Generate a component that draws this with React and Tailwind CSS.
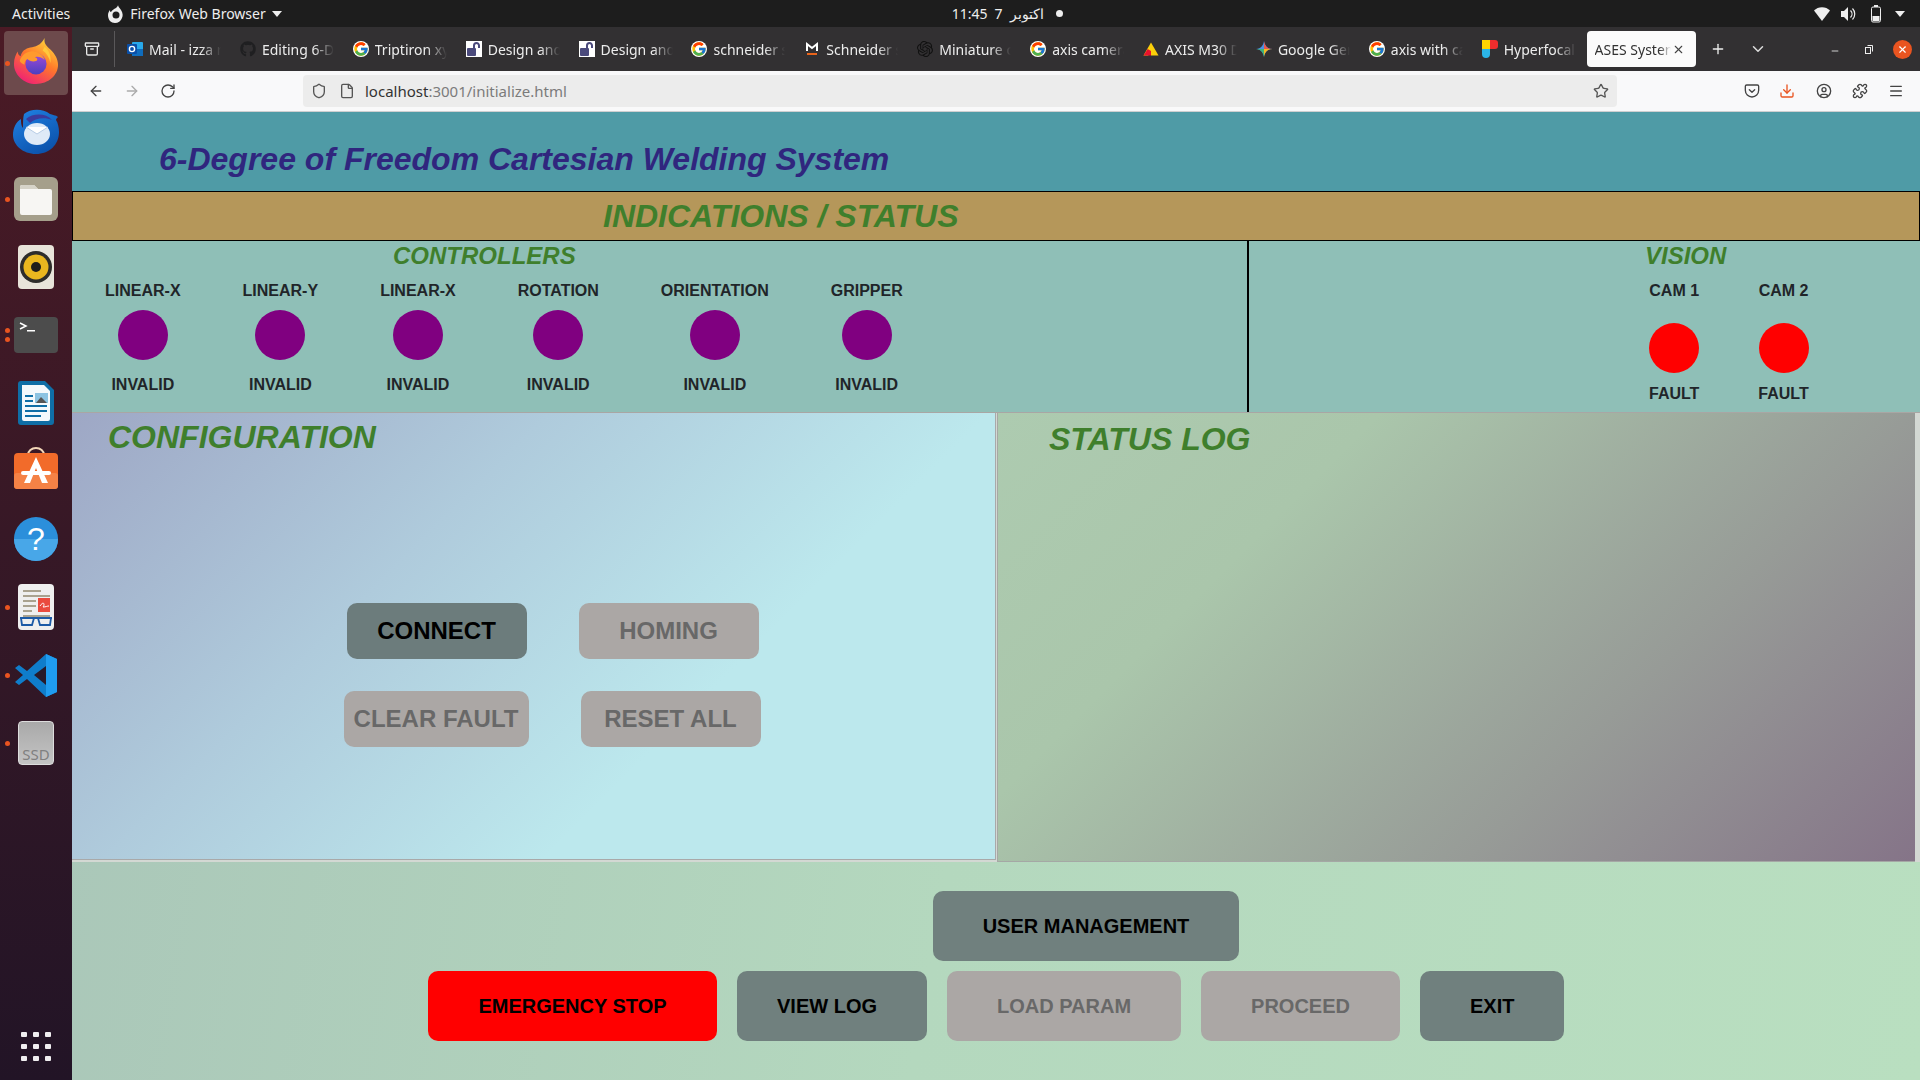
import React from 'react';
import { ArrowLeft, ArrowRight, RotateCw, Shield, File, Star, Download, Menu, Puzzle, X, Plus, ChevronDown, Minus, Pocket, CircleUser, Archive } from 'lucide-react';
import { FcGoogle } from 'react-icons/fc';
import { FaGithub } from 'react-icons/fa';
import { SiOpenai } from 'react-icons/si';

const Lock = () => (
  <svg width="16" height="16" viewBox="0 0 16 16"><rect width="16" height="16" fill="#fff" /><rect x="1" y="7" width="9" height="8" rx="1" fill="#4b4a7c" /><path d="M8 7V4.5a2.5 2.5 0 0 1 5 0V7" fill="none" stroke="#4b4a7c" strokeWidth="2" /></svg>
);
const Outlook = () => (
  <svg width="16" height="16" viewBox="0 0 16 16"><rect x="5" y="1" width="11" height="14" rx="1" fill="#28a8ea" /><rect x="5" y="8" width="11" height="7" fill="#0f6cbd" /><rect x="0" y="3" width="10" height="10" rx="1" fill="#0a4fa8" /><circle cx="5" cy="8" r="2.6" fill="none" stroke="#fff" strokeWidth="1.4" /></svg>
);
const MLogo = () => (
  <svg width="16" height="16" viewBox="0 0 16 16"><path d="M3 10V3l5 4 5-4v7" fill="none" stroke="#fff" strokeWidth="2" /><rect x="3" y="12" width="10" height="2" fill="#e8641b" /></svg>
);
const AxisLogo = () => (
  <svg width="17" height="16" viewBox="0 0 17 16"><path d="M8.5 1 16.5 15H8.5z" fill="#fbcf0a" /><path d="M8.5 1 .5 15h5l3-5z" fill="#fbcf0a" /><path d="M5 8 .5 15h8v-5z" fill="#e8112d" /></svg>
);
const Gemini = () => (
  <svg width="16" height="16" viewBox="0 0 16 16"><path d="M8 0C8.6 4.5 11 7.4 16 8 11 8.6 8.6 11.5 8 16 7.4 11.5 5 8.6 0 8 5 7.4 7.4 4.5 8 0z" fill="#4a90e2" /><path d="M8 0C8.6 4.5 11 7.4 16 8H8z" fill="#e8574d" /><path d="M16 8C11 8.6 8.6 11.5 8 16V8z" fill="#f5b821" /><path d="M8 16C7.4 11.5 5 8.6 0 8h8z" fill="#3db37a" /></svg>
);
const Hyper = () => (
  <svg width="16" height="18" viewBox="0 0 16 18"><rect x="0" y="0" width="8" height="9" fill="#ffd400" /><path d="M8 0h5a3 3 0 0 1 3 3v3a3 3 0 0 1-3 3H8z" fill="#ef2d2d" /><path d="M0 9h8v5a4 4 0 0 1-8 0z" fill="#2bb4e6" /></svg>
);

const tabs = [
  [<Outlook />, 'Mail - izza rashid'],
  [<FaGithub size={16} color="#1f1f21" />, 'Editing 6-DOF'],
  [<FcGoogle size={16} className="rounded-full bg-white" />, 'Triptiron xyz'],
  [<Lock />, 'Design and dev'],
  [<Lock />, 'Design and dev'],
  [<FcGoogle size={16} className="rounded-full bg-white" />, 'schneider servo'],
  [<MLogo />, 'Schneider servo'],
  [<SiOpenai size={16} color="#111" />, 'Miniature camera'],
  [<FcGoogle size={16} className="rounded-full bg-white" />, 'axis camera'],
  [<AxisLogo />, 'AXIS M30 Dome'],
  [<Gemini />, 'Google Gemini'],
  [<FcGoogle size={16} className="rounded-full bg-white" />, 'axis with camera'],
  [<Hyper />, 'Hyperfocal dist'],
];

const Tab = ({ icon, text }) => (
  <div className="w-[112.9px] h-[36px] shrink-0 flex items-center pl-2 gap-[6px]">
    <span className="w-4 h-4 shrink-0 flex items-center justify-center">{icon}</span>
    <span className="w-[72px] overflow-hidden whitespace-nowrap text-[14px] text-[#ececec] [mask-image:linear-gradient(to_right,black_72%,transparent)]">{text}</span>
  </div>
);

const Firefox = () => (
  <svg className="-mt-1" width="46" height="46" viewBox="0 0 48 48">
    <defs>
      <linearGradient id="ff1" x1="0.8" y1="0" x2="0.2" y2="1"><stop offset="0" stopColor="#ffdd3c" /><stop offset="0.45" stopColor="#ff7a2a" /><stop offset="1" stopColor="#ee1a7a" /></linearGradient>
      <linearGradient id="ff2" x1="0.5" y1="0" x2="0.5" y2="1"><stop offset="0" stopColor="#a44bd8" /><stop offset="1" stopColor="#4a3fc0" /></linearGradient>
    </defs>
    <path d="M33 0c-1 6 2 8 6 12 5 5 8 10 8 16 0 11-10 20-23 20S1 38 1 27c0-6 2-10 4-13 0 3 1 4 3 5 1-5 5-8 10-9 5-1 11-2 15-10z" fill="url(#ff1)" />
    <circle cx="24" cy="27" r="11" fill="url(#ff2)" />
    <path d="M7 24c2-7 9-11 15-10 6 1 10 5 11 9-3-3-7-4-10-3 3 1 3 3 1 4-3 1-7 0-9-2-2 1-3 3-3 6-2-1-4-2-5-4z" fill="#ff9a2e" />
    <path d="M33 9c5 4 7 10 6 17-1-6-4-10-8-13z" fill="#ffc93c" />
  </svg>
);
const Thunderbird = () => (
  <svg width="48" height="46" viewBox="0 0 48 46">
    <defs><linearGradient id="tb" x1="0.2" y1="0" x2="0.8" y2="1"><stop offset="0" stopColor="#1f7fe0" /><stop offset="1" stopColor="#0a4fa8" /></linearGradient></defs>
    <path d="M12 5c6-5 18-6 26 0 2 1 6 1 8 3-1 1-2 2-2 3 2 3 3 8 3 12 0 13-10 22-23 22S1 36 1 26C1 19 4 13 9 10c0 3 0 7 2 9 0-6 0-10 1-14z" fill="url(#tb)" />
    <path d="M14 10c7-6 20-6 26 1-7-3-17-2-22 3z" fill="#3b3a9c" />
    <ellipse cx="25" cy="25" rx="13" ry="11" fill="#dfeaf7" />
    <path d="M14 18l11 7 11-7" fill="#fff" stroke="#b9cde6" strokeWidth="1" />
  </svg>
);
const Files = () => (
  <svg width="44" height="44" viewBox="0 0 44 44">
    <rect width="44" height="44" rx="6" fill="#a59f8b" />
    <path d="M6 10a2 2 0 0 1 2-2h12l4 4h12a2 2 0 0 1 2 2v22a2 2 0 0 1-2 2H8a2 2 0 0 1-2-2z" fill="#f7f6f3" />
    <path d="M6 12h18l-4-4H8a2 2 0 0 0-2 2z" fill="#d6d3c8" />
  </svg>
);
const Rhythm = () => (
  <svg width="36" height="44" viewBox="0 0 36 44">
    <rect width="36" height="44" rx="4" fill="#e8e4da" />
    <circle cx="18" cy="22" r="16" fill="#2e2d2b" />
    <circle cx="18" cy="22" r="12.5" fill="#eab71f" />
    <circle cx="18" cy="22" r="5" fill="#1e1d1b" />
  </svg>
);
const Terminal = () => (
  <svg width="44" height="36" viewBox="0 0 44 36">
    <rect width="44" height="36" rx="4" fill="#4c4c4c" />
    <path d="M6 6l6 3-6 3" fill="none" stroke="#fff" strokeWidth="1.5" />
    <rect x="13" y="13" width="8" height="1.5" fill="#fff" />
  </svg>
);
const Writer = () => (
  <svg width="36" height="44" viewBox="0 0 36 44">
    <path d="M3 0h24l9 9v32a3 3 0 0 1-3 3H3a3 3 0 0 1-3-3V3a3 3 0 0 1 3-3z" fill="#0f6ea6" />
    <path d="M4 4h22l6 6v28a2 2 0 0 1-2 2H6a2 2 0 0 1-2-2z" fill="#f4f9fc" />
    <rect x="7" y="14" width="8" height="2" fill="#0f6ea6" /><rect x="7" y="19" width="8" height="2" fill="#0f6ea6" /><rect x="7" y="24" width="22" height="2" fill="#0f6ea6" /><rect x="7" y="29" width="22" height="2" fill="#0f6ea6" /><rect x="7" y="34" width="16" height="2" fill="#0f6ea6" />
    <rect x="17" y="12" width="13" height="10" fill="#8cc3e2" /><path d="M18 22l5-6 3 3 3 3z" fill="#555" />
  </svg>
);
const Store = () => (
  <svg width="44" height="42" viewBox="0 0 44 42">
    <path d="M14 8a8 7 0 0 1 16 0" fill="none" stroke="#f3d7b8" strokeWidth="2" />
    <rect y="6" width="44" height="36" rx="4" fill="#f26b2a" />
    <rect y="26" width="44" height="16" rx="3" fill="#f58246" />
    <path d="M22 10 10 36h6l6-15 6 15h6z" fill="#fff" />
    <rect x="7" y="24" width="30" height="4" rx="2" fill="#fff" />
  </svg>
);
const Help = () => (
  <svg width="44" height="44" viewBox="0 0 44 44">
    <circle cx="22" cy="22" r="22" fill="#2b8fdb" />
    <path d="M0 22a22 22 0 0 0 44 0z" fill="#48a7e8" />
    <text x="22" y="33" textAnchor="middle" fontSize="32" fontFamily="'Liberation Sans',sans-serif" fill="#fff">?</text>
  </svg>
);
const Reader = () => (
  <svg width="36" height="46" viewBox="0 0 36 46">
    <rect width="36" height="46" rx="4" fill="#efefef" />
    <rect x="5" y="6" width="18" height="2" fill="#a9a28f" /><rect x="5" y="11" width="27" height="2" fill="#a9a28f" /><rect x="5" y="16" width="13" height="2" fill="#a9a28f" /><rect x="5" y="21" width="13" height="2" fill="#a9a28f" /><rect x="5" y="26" width="9" height="2" fill="#a9a28f" /><rect x="5" y="31" width="27" height="2" fill="#a9a28f" />
    <rect x="20" y="14" width="12" height="14" fill="#ea4b3e" /><path d="M22 22c4-6 5-1 3 1 3 0 4-1 6-1" fill="none" stroke="#fff" strokeWidth="1" />
    <path d="M2 34h32M3 34l1 7h10l2-7M20 34l2 7h10l1-7" fill="none" stroke="#1c5aa6" strokeWidth="1.8" />
  </svg>
);
const VSCode = () => (
  <svg width="42" height="43" viewBox="0 0 42 43">
    <path d="M31 0 42 5v33l-11 5L12 25 4 31 0 28l8-7-8-7 4-3 8 6z" fill="#0f7dcb" />
    <path d="M31 0v43L42 38V5z" fill="#1f9cf0" />
    <path d="M31 12 19 21l12 10z" fill="#271a2b" />
  </svg>
);
const SSD = () => (
  <div className="w-9 h-[44px] rounded-[4px] bg-gradient-to-b from-[#a9a9a9] to-[#c4c4c4] border border-[#ddd] flex items-end justify-center font-['Noto_Sans',sans-serif] text-[15px] leading-[20px] text-[#808080]">SSD</div>
);

const Dot = () => <span className="block w-[5px] h-[5px] rounded-full bg-[#e95420]" />;

const DockItem = ({ h, dots = 0, children }) => (
  <div className={`relative w-full flex items-center justify-center ${h}`}>
    {dots > 0 && (
      <div className="absolute left-[5px] top-0 bottom-0 flex flex-col justify-center gap-1">
        {Array.from({ length: dots }).map((_, i) => <Dot key={i} />)}
      </div>
    )}
    {children}
  </div>
);

const Indicator = ({ label, state, color, circleTop, stateTop }) => (
  <div className="flex flex-col items-center">
    <div className="text-[16px] leading-[18px] font-bold text-[#212529] whitespace-nowrap">{label}</div>
    <div className={`w-[50px] h-[50px] rounded-full ${color} ${circleTop}`} />
    <div className={`text-[16px] leading-[18px] font-bold text-[#212529] ${stateTop}`}>{state}</div>
  </div>
);

const CfgBtn = ({ children, on, w }) => (
  <div className={`h-14 rounded-[10px] flex items-center justify-center text-[24px] font-bold ${w} ${on ? 'bg-[#6c7c7c] text-black' : 'bg-[#aba7a5] text-[#686868]'}`}>{children}</div>
);
const BigBtn = ({ children, kind, className = '' }) => {
  const tone = kind === 'red' ? 'bg-[#ff0000] text-black' : kind === 'off' ? 'bg-[#aba7a5] text-[#686868]' : 'bg-[#70807e] text-black';
  return <div className={`h-[70px] rounded-[10px] flex items-center text-[20px] font-bold whitespace-nowrap ${tone} ${className}`}>{children}</div>;
};

export default function App() {
  return (
    <div className="w-[1920px] h-[1080px] overflow-hidden flex flex-col font-['Liberation_Sans',sans-serif]">
      {/* system top bar */}
      <div className="h-[27px] shrink-0 bg-[#1d1d1d] flex items-center text-[14px] text-[#eeeeee] font-['Noto_Sans',sans-serif]">
        <span className="ml-3">Activities</span>
        <svg className="ml-[38px]" width="16" height="18" viewBox="0 0 16 18"><path d="M10 0c0 2 2 3 3 5 2 3 2 6 1 8-1 3-4 5-7 5-4 0-7-3-7-8 0-2 1-4 2-5 0 1 0 2 1 2 1-2 3-3 5-4 1-1 2-2 2-3z" fill="#eee" /><circle cx="8" cy="10" r="3.5" fill="#1d1d1d" /></svg>
        <span className="ml-[6px]">Firefox Web Browser</span>
        <svg className="ml-[6px]" width="10" height="6" viewBox="0 0 10 6"><path d="M0 0h10L5 6z" fill="#eee" /></svg>
        <div className="ml-[670px] flex items-center">
          <span>11:45</span>
          <span className="ml-[7px]">7</span>
          <span className="ml-[7px]">اكتوبر</span>
          <span className="ml-[12px] block w-[7px] h-[7px] rounded-full bg-[#eee]" />
        </div>
        <div className="ml-auto flex items-center">
          <svg width="16" height="14" viewBox="0 0 16 14"><path d="M0 3.5C4-1 12-1 16 3.5L8 14z" fill="#eee" /></svg>
          <svg className="ml-[11px]" width="15" height="14" viewBox="0 0 15 14"><path d="M0 4h3l4-4v14l-4-4H0z" fill="#eee" /><path d="M9.5 3.5c2 2 2 5 0 7M11.5 1.5c3 3 3 8 0 11" fill="none" stroke="#eee" strokeWidth="1.2" /></svg>
          <svg className="ml-[15px]" width="10" height="18" viewBox="0 0 10 18"><rect x="0.5" y="2" width="9" height="15" rx="1.5" fill="none" stroke="#eee" /><rect x="3" y="0" width="4" height="2" fill="#eee" /><rect x="1.5" y="11" width="7" height="5" fill="#eee" /></svg>
          <svg className="ml-[14px] mr-[15px]" width="10" height="6" viewBox="0 0 10 6"><path d="M0 0h10L5 6z" fill="#eee" /></svg>
        </div>
      </div>

      <div className="flex-1 flex min-h-0">
        {/* dock */}
        <div className="w-[72px] shrink-0 bg-gradient-to-b from-[#4b1a25] to-[#221426] flex flex-col items-center pt-1">
          <DockItem h="h-16 mb-[14px]" dots={1}>
            <div className="w-16 h-16 rounded-[4px] bg-[#6d4a4c] flex items-center justify-center"><Firefox /></div>
          </DockItem>
          <DockItem h="h-[46px] mb-[22px]"><Thunderbird /></DockItem>
          <DockItem h="h-[44px] mb-[24px]" dots={1}><Files /></DockItem>
          <DockItem h="h-[44px] mb-[28px]"><Rhythm /></DockItem>
          <DockItem h="h-[36px] mb-[28px]" dots={2}><Terminal /></DockItem>
          <DockItem h="h-[44px] mb-[22px]"><Writer /></DockItem>
          <DockItem h="h-[42px] mb-[28px]"><Store /></DockItem>
          <DockItem h="h-[44px] mb-[23px]"><Help /></DockItem>
          <DockItem h="h-[46px] mb-[24px]" dots={1}><Reader /></DockItem>
          <DockItem h="h-[43px] mb-[24px]" dots={1}><VSCode /></DockItem>
          <DockItem h="h-[44px]" dots={1}><SSD /></DockItem>
          <div className="mt-auto mb-[19px] grid grid-cols-3 gap-x-[6px] gap-y-[7px]">
            {Array.from({ length: 9 }).map((_, i) => <span key={i} className="block w-[6px] h-[5px] rounded-[1px] bg-[#f0eef0]" />)}
          </div>
        </div>

        <div className="flex-1 min-w-0 flex flex-col">
          {/* tab strip */}
          <div className="h-[44px] shrink-0 bg-[#323032] flex items-center font-['Noto_Sans',sans-serif]">
            <Archive size={16} color="#e8e8e8" className="ml-3" />
            <div className="ml-[14px] w-px h-[36px] bg-[#5a585a] mr-1" />
            {tabs.map(([icon, text], i) => <Tab key={i} icon={icon} text={text} />)}
            <div className="w-[109px] h-[36px] bg-[#fbfbfb] rounded-[4px] flex items-center pl-2 shrink-0">
              <span className="w-[76px] overflow-hidden whitespace-nowrap text-[14px] text-[#333] [mask-image:linear-gradient(to_right,black_85%,transparent)]">ASES System</span>
              <X size={13} color="#444" className="ml-[1px]" />
            </div>
            <Plus size={16} color="#eee" className="ml-[14px]" />
            <ChevronDown size={18} color="#ddd" className="ml-[23px]" />
            <Minus size={10} color="#eee" className="ml-[63px] mt-1" />
            <svg className="ml-[25px]" width="8" height="9" viewBox="0 0 8 9"><rect x="0.5" y="2.5" width="5" height="6" fill="none" stroke="#eee" /><path d="M2.5 0.5h5v6" fill="none" stroke="#eee" /></svg>
            <div className="ml-[20px] w-[19px] h-[19px] rounded-full bg-[#e95420] flex items-center justify-center"><X size={11} color="#fff" strokeWidth={2.5} /></div>
          </div>

          {/* nav bar */}
          <div className="h-[41px] shrink-0 bg-[#f9f9fa] border-b border-[#cfcfd0] flex items-center font-['Noto_Sans',sans-serif]">
            <ArrowLeft size={16} color="#444" className="ml-4" />
            <ArrowRight size={16} color="#aaa" className="ml-5" />
            <RotateCw size={16} color="#444" className="ml-5" />
            <div className="ml-[127px] w-[1314px] h-8 rounded-[4px] bg-[#ececec] flex items-center">
              <Shield size={16} color="#555" className="ml-2" />
              <File size={16} color="#555" className="ml-3" />
              <span className="ml-[10px] text-[15px] text-[#333]">localhost<span className="text-[#7b7b7b]">:3001/initialize.html</span></span>
              <Star size={16} color="#555" className="ml-auto mr-2" />
            </div>
            <Pocket size={16} color="#444" className="ml-[127px]" />
            <Download size={16} color="#e95420" className="ml-[19px]" />
            <CircleUser size={16} color="#444" className="ml-[21px]" />
            <Puzzle size={16} color="#444" className="ml-[20px]" />
            <Menu size={16} color="#444" className="ml-[20px]" />
          </div>

          {/* page */}
          <div className="flex-1 min-h-0 flex flex-col bg-[linear-gradient(100deg,#a9c5b8,#b4d8be_50%,#b9dfc0)]">
            <div className="h-[79px] shrink-0 bg-[#4f9ba6] pl-[87px] pt-[29px] text-[32px] leading-[37px] font-bold italic text-[#30267e]">
              6-Degree of Freedom Cartesian Welding System
            </div>
            <div className="h-[50px] shrink-0 bg-[#b5975a] border border-black pl-[530px] text-[32px] leading-[48px] font-bold italic text-[#3f7f2c]">
              INDICATIONS / STATUS
            </div>
            <div className="h-[171px] shrink-0 bg-[#8fbfb7] flex pt-px">
              <div className="w-[1177px] shrink-0 border-r-2 border-black -mt-px pt-px">
                <div className="ml-[321px] text-[24px] leading-[28px] font-bold italic text-[#3f7f2c]">CONTROLLERS</div>
                <div className="ml-[33px] mt-3 flex gap-[62px]">
                  {['LINEAR-X', 'LINEAR-Y', 'LINEAR-X', 'ROTATION', 'ORIENTATION', 'GRIPPER'].map((l, i) => (
                    <Indicator key={i} label={l} state="INVALID" color="bg-[#800080]" circleTop="mt-[10px]" stateTop="mt-4" />
                  ))}
                </div>
              </div>
              <div className="flex-1">
                <div className="ml-[396px] text-[24px] leading-[28px] font-bold italic text-[#3f7f2c]">VISION</div>
                <div className="ml-[400px] mt-3 flex gap-[59px]">
                  {['CAM 1', 'CAM 2'].map((l) => (
                    <Indicator key={l} label={l} state="FAULT" color="bg-[#ff0000]" circleTop="mt-[23px]" stateTop="mt-3" />
                  ))}
                </div>
              </div>
            </div>

            <div className="h-[450px] shrink-0 flex items-start border-t border-[#a9a6a4] bg-[#d3d8d3]">
              <div className="w-[924px] h-[447px] shrink-0 border-b border-r border-[#a9a9a9] bg-[linear-gradient(135deg,#9ea7c5,#afcbdc_35%,#bce8ed_67%)] pl-9 pt-[6px]">
                <div className="text-[32px] leading-[37px] font-bold italic text-[#3f7f2c]">CONFIGURATION</div>
                <div className="mt-[147px] pl-[2px] flex flex-col gap-8">
                  <div className="flex justify-center gap-[52px]">
                    <CfgBtn on w="w-[180px]">CONNECT</CfgBtn>
                    <CfgBtn w="w-[180px]">HOMING</CfgBtn>
                  </div>
                  <div className="flex justify-center gap-[52px] pr-[1px]">
                    <CfgBtn w="w-[185px]">CLEAR FAULT</CfgBtn>
                    <CfgBtn w="w-[180px]">RESET ALL</CfgBtn>
                  </div>
                </div>
              </div>
              <div className="ml-px w-[918px] h-full shrink-0 border-l border-b border-[#a5a8a5] bg-[linear-gradient(135deg,#adcbb0,#aac6ab_28%,#979b97_67%,#857488)] pl-[51px] pt-2">
                <div className="text-[32px] leading-[37px] font-bold italic text-[#3f7f2c]">STATUS LOG</div>
              </div>
            </div>

            <div className="flex-1 flex flex-col">
              <div className="ml-[861px] mt-[29px]">
                <BigBtn className="w-[306px] justify-center">USER MANAGEMENT</BigBtn>
              </div>
              <div className="ml-[356px] mt-[10px] flex gap-5">
                <BigBtn kind="red" className="w-[289px] justify-center">EMERGENCY STOP</BigBtn>
                <BigBtn className="pl-10 pr-[50px]">VIEW LOG</BigBtn>
                <BigBtn kind="off" className="px-[50px]">LOAD PARAM</BigBtn>
                <BigBtn kind="off" className="px-[50px]">PROCEED</BigBtn>
                <BigBtn className="px-[50px]">EXIT</BigBtn>
              </div>
            </div>
          </div>
        </div>
      </div>
    </div>
  );
}
